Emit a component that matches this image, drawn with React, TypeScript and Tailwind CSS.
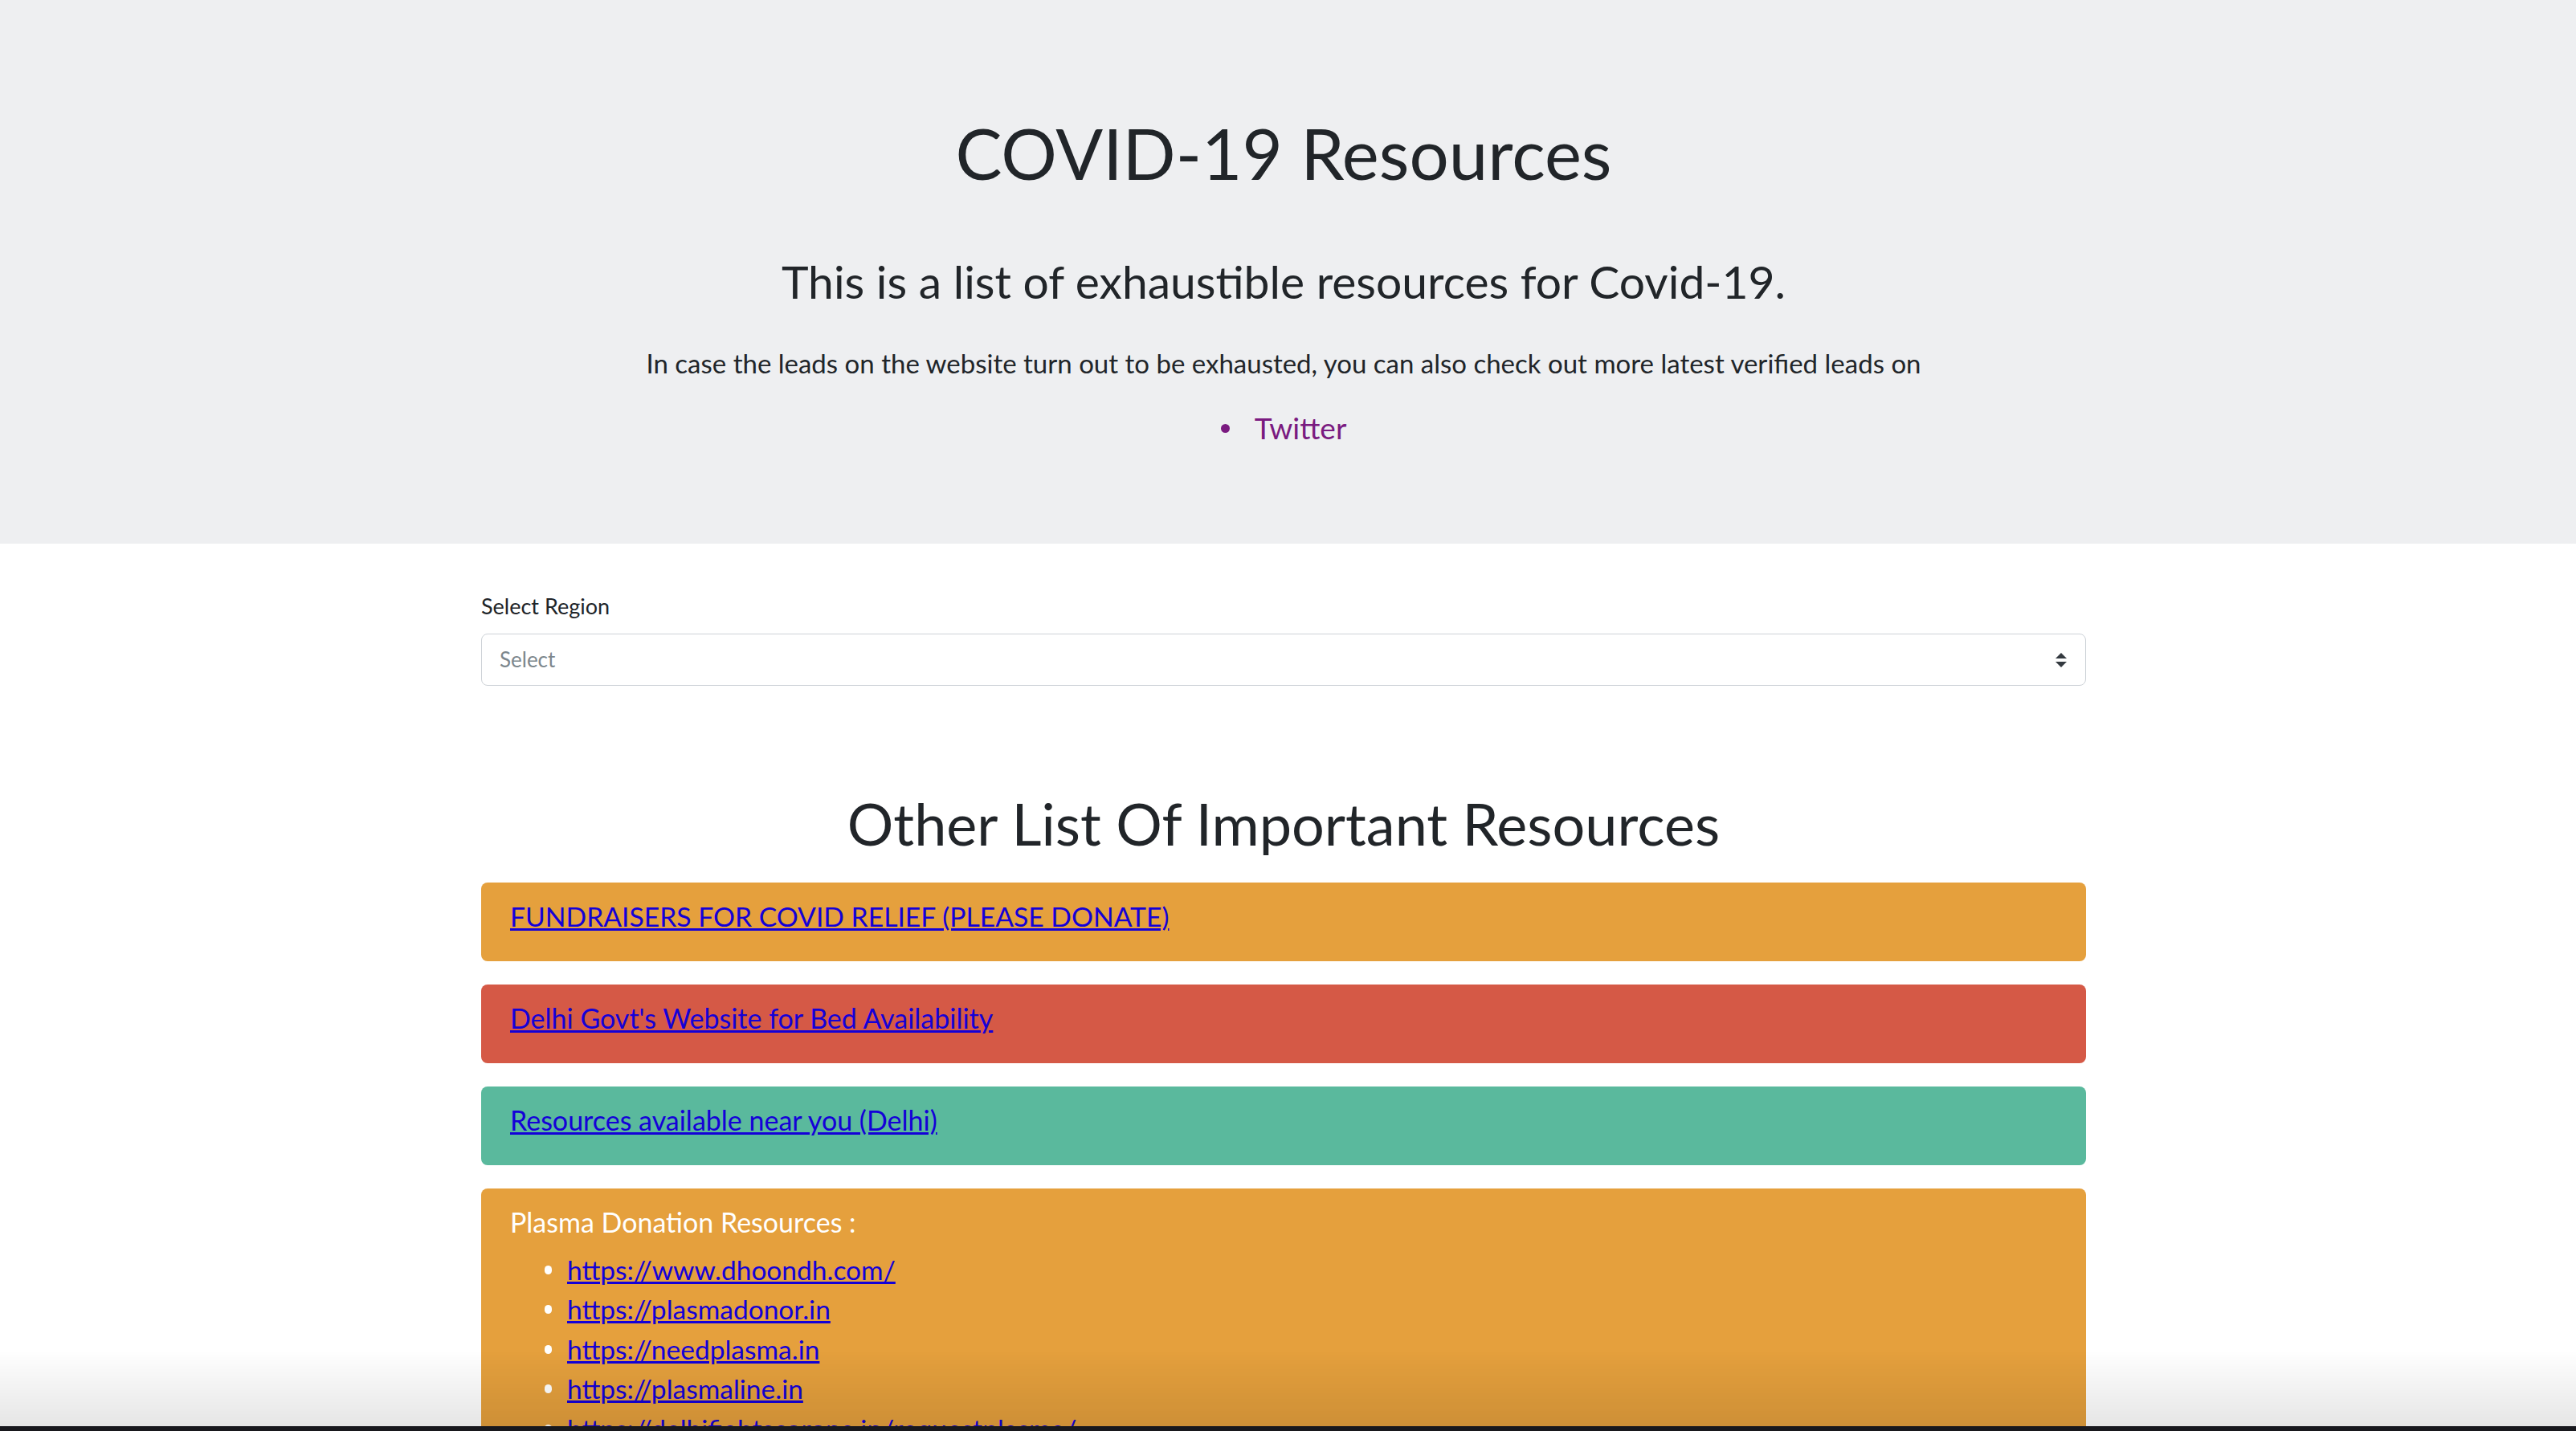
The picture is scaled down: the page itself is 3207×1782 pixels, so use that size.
import React from 'react';

const plasmaLinks = [
  'https://www.dhoondh.com/',
  'https://plasmadonor.in',
  'https://needplasma.in',
  'https://plasmaline.in',
  'https://delhifightscorona.in/requestplasma/',
  'https://covidplasma.online',
];

const App: React.FC = () => {
  return (
    <div className="min-h-screen bg-white text-[#212529] font-[family-name:Lato,sans-serif]">
      {/* hero */}
      <header className="bg-[#eeeff1] pt-[139px] pb-[116px]">
        <div className="pr-[11px] text-center">
          <h1 className="text-[87px] leading-[1.2] font-normal">COVID-19 Resources</h1>
          <h3 className="mt-[73px] text-[57px] leading-[1.2] font-normal">
            This is a list of exhaustible resources for Covid-19.
          </h3>
          <p className="mt-[43px] text-[33px] leading-[1.5]">
            In case the leads on the website turn out to be exhausted, you can also check out more latest verified leads on
          </p>
          <ul className="mt-[28px]">
            <li className="flex items-center justify-center gap-[31px] text-[37px] leading-[1.5] text-[#7a1a80]">
              <span className="w-[11px] h-[11px] rounded-full bg-[#7a1a80]" />
              <a href="#" className="no-underline">Twitter</a>
            </li>
          </ul>
        </div>
      </header>

      <main className="pr-[11px]">
        <div className="w-[1998px] mx-auto">
          <label className="block mt-[58px] text-[27px] leading-[1.5]">Select Region</label>
          <div className="mt-[14px] h-[65px] flex items-center justify-between px-[22px] border border-[#cdd2d7] rounded-[8px] bg-white">
            <span className="text-[26px] text-[#7d878d]">Select</span>
            <svg width="14" height="18" viewBox="0 0 14 18" className="mr-[1px]">
              <path d="M7 0 L14 7 L0 7 Z" fill="#343a40" />
              <path d="M0 11 L14 11 L7 18 Z" fill="#343a40" />
            </svg>
          </div>

          <h2 className="mt-[128px] text-center text-[72px] leading-[1.2] font-normal">
            Other List Of Important Resources
          </h2>

          <div className="mt-[30px] flex flex-col gap-[29px] pb-[80px]">
            <div className="h-[98px] rounded-[8px] bg-[#e5a03d] px-[36px] pt-[16px] text-[34px] leading-[1.5]">
              <a href="#" className="text-[#1400d8] underline decoration-[3px] text-[33.7px]">FUNDRAISERS FOR COVID RELIEF (PLEASE DONATE)</a>
            </div>
            <div className="h-[98px] rounded-[8px] bg-[#d55946] px-[36px] pt-[16px] text-[34px] leading-[1.5]">
              <a href="#" className="text-[#1400d8] underline decoration-[3px]">Delhi Govt's Website for Bed Availability</a>
            </div>
            <div className="h-[98px] rounded-[8px] bg-[#5ab99d] px-[36px] pt-[16px] text-[34px] leading-[1.5]">
              <a href="#" className="text-[#1400d8] underline decoration-[3px]">Resources available near you (Delhi)</a>
            </div>
            <div className="rounded-[8px] bg-[#e5a03d] px-[36px] pt-[16px] pb-[34px] text-[34px] leading-[1.5]">
              <p className="text-white">Plasma Donation Resources :</p>
              <ul className="mt-[10px] text-[33.5px]">
                {plasmaLinks.map((link) => (
                  <li key={link} className="flex items-center gap-[19px] pl-[43px] leading-[49.5px]">
                    <span className="w-[9px] h-[11px] rounded-full bg-white" />
                    <a href="#" className="text-[#1400d8] underline decoration-[3px]">{link}</a>
                  </li>
                ))}
              </ul>
            </div>
          </div>
        </div>
      </main>

      {/* bottom edge shading of the screen */}
      <div className="fixed left-0 right-0 bottom-[6px] h-[95px] bg-gradient-to-b from-transparent to-black/10 pointer-events-none" />
      <div className="fixed left-0 right-0 bottom-0 h-[6px] bg-[#18181d]" />
    </div>
  );
};

export default App;
